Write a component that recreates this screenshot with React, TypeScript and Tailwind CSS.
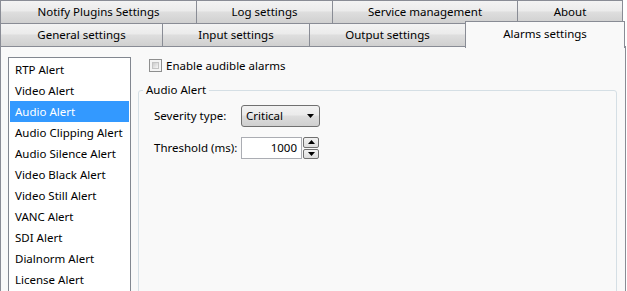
import React from "react";

const tabBg =
  "bg-[linear-gradient(#f3f3f3,#ebebeb_45%,#dedede_50%,#d0d0d0)]";

const topTabs = [
  { label: "Notify Plugins Settings", w: "w-[197px]" },
  { label: "Log settings", w: "w-[137px]" },
  { label: "Service management", w: "w-[186px]" },
  { label: "About", w: "w-[106px]" },
];

const bottomTabs = [
  { label: "General settings", w: "w-[163px]" },
  { label: "Input settings", w: "w-[148px]" },
  { label: "Output settings", w: "w-[157px]" },
];

const alerts = [
  "RTP Alert",
  "Video Alert",
  "Audio Alert",
  "Audio Clipping Alert",
  "Audio Silence Alert",
  "Video Black Alert",
  "Video Still Alert",
  "VANC Alert",
  "SDI Alert",
  "Dialnorm Alert",
  "License Alert",
];

function Tab({ label, w }: { label: string; w: string }) {
  return (
    <div
      className={`${w} -mr-px flex h-full items-center justify-center border border-[#898c95] ${tabBg}`}
    >
      {label}
    </div>
  );
}

export default function App() {
  const selected = "Audio Alert";

  return (
    <div
      className="flex h-[291px] w-[627px] flex-col overflow-hidden bg-white text-[11.5px] text-black"
      style={{ fontFamily: '"Segoe UI", "Noto Sans", sans-serif' }}
    >
      {/* tab rows */}
      <div className="flex h-[24px] shrink-0">
        {topTabs.map((t) => (
          <Tab key={t.label} {...t} />
        ))}
      </div>
      <div className="-mt-px flex h-[24px] shrink-0">
        {bottomTabs.map((t) => (
          <Tab key={t.label} {...t} />
        ))}
        <div className="relative z-10 -mt-[2px] flex h-[27px] w-[160px] items-start justify-center border border-b-0 border-[#898c95] bg-[#f9f9f9] pt-[3px]">
          Alarms settings
        </div>
      </div>

      {/* pane */}
      <div className="-mt-px flex h-[260px] w-[626px] shrink-0 border border-[#898c95] bg-[#f9f9f9] pl-[7px] pt-[10px]">
        <div className="h-[240px] w-[123px] shrink-0 border border-[#828790] bg-white p-px">
          {alerts.map((a) => (
            <div
              key={a}
              className={`flex h-[21px] items-center pl-[5px] ${
                a === selected ? "bg-[#3399ff] text-white" : ""
              }`}
            >
              {a}
            </div>
          ))}
        </div>

        <div className="ml-[7px] flex flex-col">
          <div className="ml-[11px] mt-[2px] flex h-[13px] items-center gap-[4px]">
            <div className="h-[13px] w-[13px] border border-[#8e8f8f] bg-[#f4f4f4] p-[2px]">
              <div className="h-full w-full border border-[#c4c4c4] bg-[linear-gradient(135deg,#cbcbcb,#f6f6f6)]" />
            </div>
            <span>Enable audible alarms</span>
          </div>

          <fieldset className="mt-[10px] h-[220px] w-[479px] rounded-[3px] border border-[#d5dfe5] pl-[4px]">
            <legend className="px-[3px] leading-[16px]">Audio Alert</legend>
            <div className="ml-[11px] mt-[7px] grid grid-cols-[87px_auto] items-center gap-y-[10px]">
              <span>Severity type:</span>
              <div className="flex h-[22px] w-[79px] items-center justify-between rounded-[3px] border border-[#707070] bg-[linear-gradient(#f2f2f2,#ebebeb_45%,#dddddd_50%,#cfcfcf)] pl-[4px] pr-[5px]">
                <span>Critical</span>
                <svg width="7" height="4" viewBox="0 0 7 4">
                  <path d="M0 0h7L3.5 4z" fill="#000" />
                </svg>
              </div>

              <span>Threshold (ms):</span>
              <div className="flex h-[22px] items-stretch gap-px">
                <div className="flex w-[61px] items-center justify-end border border-[#abadb3] bg-white pr-[4px]">
                  1000
                </div>
                <div className="flex w-[16px] flex-col gap-px">
                  <div className="flex flex-1 items-center justify-center rounded-[2px] border border-[#707070] bg-[linear-gradient(#f2f2f2,#dddddd)]">
                    <svg width="7" height="4" viewBox="0 0 7 4">
                      <path d="M0 4h7L3.5 0z" fill="#000" />
                    </svg>
                  </div>
                  <div className="flex flex-1 items-center justify-center rounded-[2px] border border-[#707070] bg-[linear-gradient(#f2f2f2,#dddddd)]">
                    <svg width="7" height="4" viewBox="0 0 7 4">
                      <path d="M0 0h7L3.5 4z" fill="#000" />
                    </svg>
                  </div>
                </div>
              </div>
            </div>
          </fieldset>
        </div>
      </div>
    </div>
  );
}
